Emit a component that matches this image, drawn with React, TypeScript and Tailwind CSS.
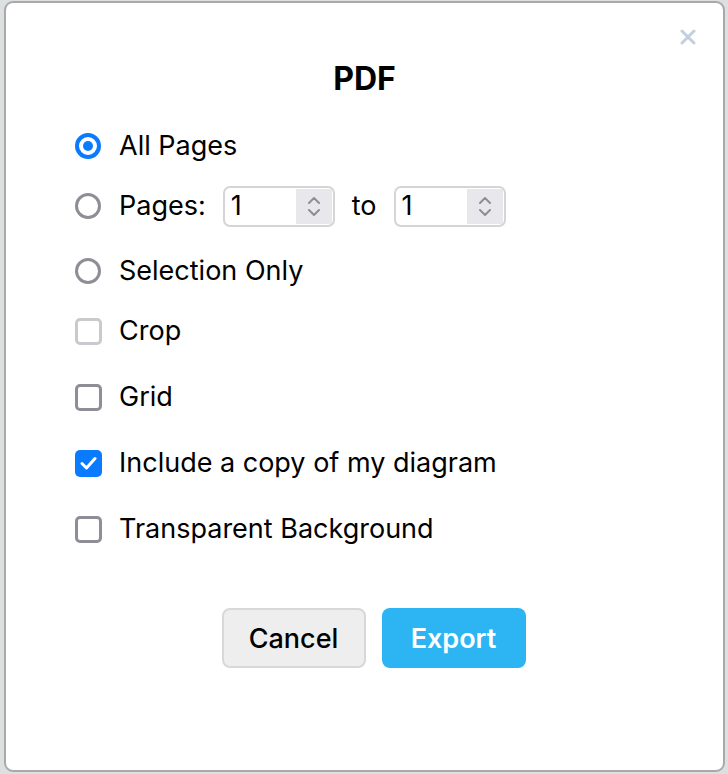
import React from "react";

const font = { fontFamily: "Inter, 'Noto Sans', sans-serif" };

const Radio = ({ checked }: { checked?: boolean }) =>
	checked ? (
		<span className="w-[26px] h-[26px] rounded-full border-[4px] border-[#0a7aff] flex items-center justify-center shrink-0">
			<span className="w-[10px] h-[10px] rounded-full bg-[#0a7aff]" />
		</span>
	) : (
		<span className="w-[26px] h-[26px] rounded-full border-[3px] border-[#8e8e96] bg-white shrink-0" />
	);

const Check = ({ checked, light }: { checked?: boolean; light?: boolean }) =>
	checked ? (
		<span className="w-[27px] h-[27px] rounded-[5px] bg-[#0a7aff] flex items-center justify-center shrink-0">
			<svg width="17" height="14" viewBox="0 0 17 14" fill="none">
				<path d="M2 7.5l4.5 4.5L15 2.5" stroke="white" strokeWidth="3" strokeLinecap="round" strokeLinejoin="round" />
			</svg>
		</span>
	) : (
		<span
			className={`w-[27px] h-[27px] rounded-[5px] border-[3px] bg-white shrink-0 ${
				light ? "border-[#cacace]" : "border-[#8e8e96]"
			}`}
		/>
	);

const NumberInput = () => (
	<div className="w-[112px] h-[41px] rounded-[7px] border-2 border-[#d5d5d7] flex items-stretch p-[1px] bg-white">
		<span className="flex-1 flex items-center pl-[5px] text-[27px] text-black">1</span>
		<span className="w-[36px] bg-[#e8e8ec] flex flex-col items-center justify-center gap-[5px]">
			<svg width="14" height="8" viewBox="0 0 14 8" fill="none">
				<path d="M2 7l5-5 5 5" stroke="#8e8e96" strokeWidth="2" strokeLinecap="round" strokeLinejoin="round" />
			</svg>
			<svg width="14" height="8" viewBox="0 0 14 8" fill="none">
				<path d="M2 1l5 5 5-5" stroke="#8e8e96" strokeWidth="2" strokeLinecap="round" strokeLinejoin="round" />
			</svg>
		</span>
	</div>
);

export default function App() {
	return (
		<div className="w-[728px] h-[774px] bg-[#dde0e0] pl-[4px] pr-[3px] pt-[1px] pb-[2px]" style={font}>
			<div className="relative w-full h-full bg-white border-2 border-[#a9a9a9] rounded-[9px] flex flex-col">
				<button className="absolute top-[26px] right-[27px] text-[#c3cfdf]">
					<svg width="16" height="16" viewBox="0 0 16 16" fill="none">
						<path d="M2 2l12 12M14 2L2 14" stroke="currentColor" strokeWidth="3" strokeLinecap="round" />
					</svg>
				</button>

				<h1 className="mt-[58px] text-center text-[32px] font-bold leading-[36px] text-black">PDF</h1>

				<div className="mt-[27px] pl-[69px] flex flex-col text-[27px] text-black">
					<label className="h-[44px] flex items-center gap-[18px]">
						<Radio checked />
						<span>All Pages</span>
					</label>
					<label className="mt-[16px] h-[44px] flex items-center gap-[18px]">
						<Radio />
						<span className="flex items-center gap-[17px]">
							<span>Pages:</span>
							<NumberInput />
							<span>to</span>
							<NumberInput />
						</span>
					</label>
					<label className="mt-[21px] h-[44px] flex items-center gap-[18px]">
						<Radio />
						<span>Selection Only</span>
					</label>
					<label className="mt-[16px] h-[44px] flex items-center gap-[17px]">
						<Check light />
						<span>Crop</span>
					</label>
					<label className="mt-[22px] h-[44px] flex items-center gap-[17px]">
						<Check />
						<span>Grid</span>
					</label>
					<label className="mt-[22px] h-[44px] flex items-center gap-[17px]">
						<Check checked />
						<span>Include a copy of my diagram</span>
					</label>
					<label className="mt-[22px] h-[44px] flex items-center gap-[17px]">
						<Check />
						<span>Transparent Background</span>
					</label>
				</div>

				<div className="mt-[57px] pl-[18px] flex justify-center gap-[16px]">
					<button className="w-[144px] h-[60px] pt-[2px] rounded-[8px] bg-[#eeeeee] border-2 border-[#d8d8d8] text-[27px] font-medium text-black">
						Cancel
					</button>
					<button className="w-[144px] h-[60px] pt-[2px] rounded-[8px] bg-[#2cb5f2] text-[27px] font-semibold text-white">
						Export
					</button>
				</div>
			</div>
		</div>
	);
}
